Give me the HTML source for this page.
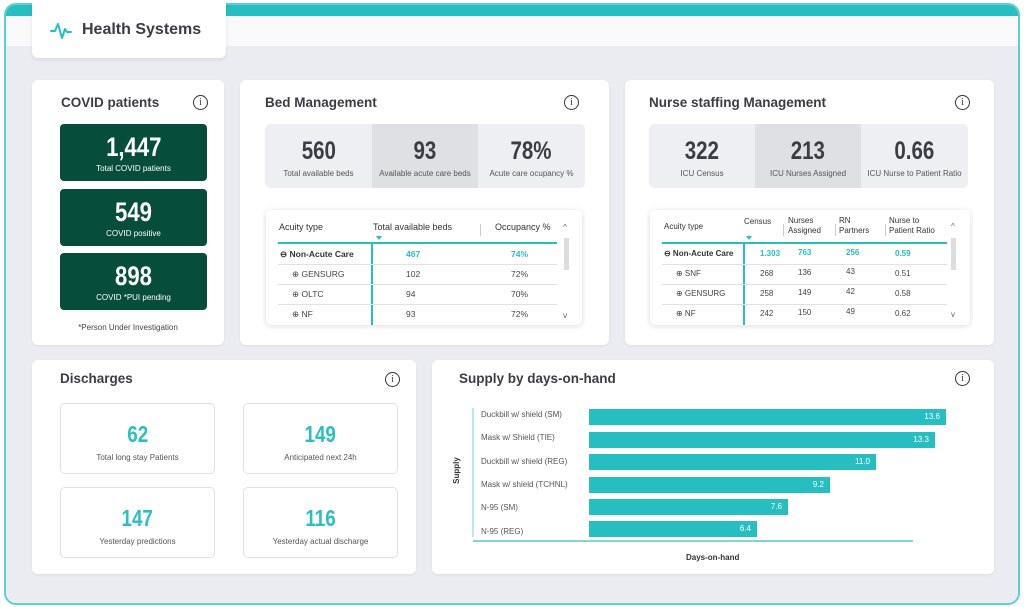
<!DOCTYPE html>
<html><head><meta charset="utf-8"><style>
*{box-sizing:border-box;margin:0;padding:0}
body{width:1024px;height:607px;background:#fff;font-family:"Liberation Sans",sans-serif;color:#3a3d44;position:relative;overflow:hidden}
.abs{position:absolute}
.frame{left:4px;top:3px;width:1016px;height:602px;border:2px solid #5ccfd0;border-radius:12px;background:#ebecf1;overflow:hidden}
.card{position:absolute;background:#fff;border-radius:6px;box-shadow:0 1px 3px rgba(0,0,0,.06)}
.h{position:absolute;font-size:13.5px;font-weight:bold;color:#3a3d44}
.info{position:absolute;width:15px;height:15px;border:1.3px solid #333;border-radius:50%;font-size:10px;text-align:center;line-height:13px;font-family:"Liberation Serif",serif}
i.n{display:inline-block;transform:scaleX(.82);font-style:normal}
.g{position:absolute;background:#074d3b;border-radius:4px;color:#fff;text-align:center}
.g b{display:block;font-size:27px;margin-top:8px;font-weight:bold}
.g span{font-size:8px;display:block;margin-top:1px}
.kpi{position:absolute;top:0;height:64px;text-align:center}
.kpi b{display:block;font-size:25px;margin-top:13px;font-weight:bold;color:#3a3d44}
.kpi span{font-size:8px;color:#555;display:block;margin-top:3px}
.tbl{position:absolute;background:#fff;border-radius:5px;box-shadow:0 1px 6px rgba(0,0,0,.15);font-size:8.5px;color:#444}
.t{position:absolute;white-space:nowrap}
.dt{position:absolute;border:1px solid #dfe0e4;border-radius:5px;text-align:center;background:#fff}
.dt b{display:block;font-size:23px;color:#2bbfc2;margin-top:17px;font-weight:bold}
.dt span{display:block;font-size:8px;color:#555;margin-top:5px}
.bar{position:absolute;left:589px;height:16px;background:#26bec1;color:#fff;font-size:8px;text-align:right;padding-right:6px;line-height:16px}
.lab{position:absolute;left:481px;font-size:8px;color:#555}
</style></head><body>
<div class="abs frame">
 <div class="abs" style="left:0;top:0;width:1016px;height:11px;background:#26bec1"></div>
 <div class="abs" style="left:0;top:11px;width:1016px;height:30px;background:#f9f9fb"></div>
</div>
<div class="card" style="left:32px;top:0;width:194px;height:58px;border-radius:0 0 6px 6px;box-shadow:0 2px 4px rgba(0,0,0,.08)">
 <svg class="abs" style="left:18px;top:22px" width="22" height="18" viewBox="0 0 22 18"><path d="M1 9h4l3-7 4 14 3-9 2 3h4" fill="none" stroke="#26bec1" stroke-width="2" stroke-linejoin="round" stroke-linecap="round"/></svg>
 <div class="abs" style="left:50px;top:21px;font-size:16px;font-weight:bold;color:#3a3d44">Health Systems</div>
</div>

<div class="card" style="left:32px;top:80px;width:192px;height:265px">
 <div class="h" style="left:29px;top:15px">COVID patients</div>
 <div class="info" style="left:161px;top:15px">i</div>
 <div class="g" style="left:28px;top:44px;width:147px;height:57px"><b><i class="n">1,447</i></b><span>Total COVID patients</span></div>
 <div class="g" style="left:28px;top:109px;width:147px;height:57px"><b><i class="n">549</i></b><span>COVID positive</span></div>
 <div class="g" style="left:28px;top:173px;width:147px;height:57px"><b><i class="n">898</i></b><span>COVID *PUI pending</span></div>
 <div class="t" style="left:0;width:192px;text-align:center;top:243px;font-size:8px;color:#444">*Person Under Investigation</div>
</div>

<div class="card" style="left:240px;top:80px;width:369px;height:265px">
 <div class="h" style="left:25px;top:15px">Bed Management</div>
 <div class="info" style="left:324px;top:15px">i</div>
 <div class="abs" style="left:25px;top:44px;width:320px;height:64px;background:#eeeff2;border-radius:5px;overflow:hidden">
  <div class="kpi" style="left:0;width:107px"><b><i class="n">560</i></b><span>Total available beds</span></div>
  <div class="kpi" style="left:107px;width:106px;background:#dfe0e4"><b><i class="n">93</i></b><span>Available acute care beds</span></div>
  <div class="kpi" style="left:213px;width:107px"><b><i class="n">78%</i></b><span>Acute care ocupancy %</span></div>
 </div>
 <div class="tbl" style="left:26px;top:130px;width:316px;height:115px">
  <div class="t" style="left:13px;top:12px;font-size:9px;color:#333">Acuity type</div>
  <div class="t" style="left:107px;top:12px;font-size:9px;color:#333">Total available beds</div>
  <div class="abs" style="left:110px;top:26px;border:3px solid transparent;border-top:4px solid #26bec1"></div>
  <div class="abs" style="left:214px;top:14px;width:1px;height:12px;background:#ccc"></div>
  <div class="t" style="left:229px;top:12px;font-size:9px;color:#333">Occupancy %</div>
  <div class="t" style="left:297px;top:12px;color:#666">^</div>
  <div class="abs" style="left:298px;top:28px;width:5px;height:32px;background:#ddd"></div>
  <div class="t" style="left:297px;top:100px;color:#666">v</div>
  <div class="abs" style="left:12px;top:32px;width:279px;height:2px;background:#26bec1"></div>
  <div class="abs" style="left:105px;top:32px;width:2px;height:83px;background:#26bec1"></div>
  <div class="abs" style="left:12px;top:54px;width:279px;height:1px;background:#e2e2e2"></div>
  <div class="abs" style="left:12px;top:74px;width:279px;height:1px;background:#e2e2e2"></div>
  <div class="abs" style="left:12px;top:94px;width:279px;height:1px;background:#e2e2e2"></div>
  <div class="t" style="left:14px;top:39px;font-weight:bold;color:#333">⊖ Non-Acute Care</div>
  <div class="t" style="left:140px;top:39px;color:#26bec1;font-weight:bold">467</div>
  <div class="t" style="left:245px;top:39px;color:#26bec1;font-weight:bold">74%</div>
  <div class="t" style="left:26px;top:59px">⊕ GENSURG</div><div class="t" style="left:140px;top:59px">102</div><div class="t" style="left:245px;top:59px">72%</div>
  <div class="t" style="left:26px;top:79px">⊕ OLTC</div><div class="t" style="left:140px;top:79px">94</div><div class="t" style="left:245px;top:79px">70%</div>
  <div class="t" style="left:26px;top:99px">⊕ NF</div><div class="t" style="left:140px;top:99px">93</div><div class="t" style="left:245px;top:99px">72%</div>
 </div>
</div>

<div class="card" style="left:625px;top:80px;width:369px;height:265px">
 <div class="h" style="left:24px;top:15px">Nurse staffing Management</div>
 <div class="info" style="left:330px;top:15px">i</div>
 <div class="abs" style="left:24px;top:44px;width:319px;height:64px;background:#eeeff2;border-radius:5px;overflow:hidden">
  <div class="kpi" style="left:0;width:106px"><b><i class="n">322</i></b><span>ICU Census</span></div>
  <div class="kpi" style="left:106px;width:106px;background:#dfe0e4"><b><i class="n">213</i></b><span>ICU Nurses Assigned</span></div>
  <div class="kpi" style="left:212px;width:107px"><b><i class="n">0.66</i></b><span>ICU Nurse to Patient Ratio</span></div>
 </div>
 <div class="tbl" style="left:25px;top:130px;width:320px;height:115px;font-size:8px">
  <div class="t" style="left:14px;top:12px;color:#333">Acuity type</div>
  <div class="t" style="left:94px;top:7px;color:#333">Census</div>
  <div class="abs" style="left:96px;top:26px;border:3px solid transparent;border-top:4px solid #26bec1"></div>
  <div class="abs" style="left:133px;top:14px;width:1px;height:12px;background:#ccc"></div>
  <div class="t" style="left:138px;top:6px;color:#333;line-height:10px">Nurses<br>Assigned</div>
  <div class="abs" style="left:185px;top:14px;width:1px;height:12px;background:#ccc"></div>
  <div class="t" style="left:189px;top:6px;color:#333;line-height:10px">RN<br>Partners</div>
  <div class="abs" style="left:235px;top:14px;width:1px;height:12px;background:#ccc"></div>
  <div class="t" style="left:239px;top:6px;color:#333;line-height:10px">Nurse to<br>Patient Ratio</div>
  <div class="t" style="left:301px;top:12px;color:#666">^</div>
  <div class="abs" style="left:301px;top:28px;width:5px;height:32px;background:#ddd"></div>
  <div class="t" style="left:301px;top:100px;color:#666">v</div>
  <div class="abs" style="left:12px;top:32px;width:285px;height:2px;background:#26bec1"></div>
  <div class="abs" style="left:93px;top:32px;width:2px;height:83px;background:#26bec1"></div>
  <div class="abs" style="left:12px;top:54px;width:285px;height:1px;background:#e2e2e2"></div>
  <div class="abs" style="left:12px;top:74px;width:285px;height:1px;background:#e2e2e2"></div>
  <div class="abs" style="left:12px;top:94px;width:285px;height:1px;background:#e2e2e2"></div>
  <div class="t" style="left:14px;top:39px;font-weight:bold;color:#333">⊖ Non-Acute Care</div>
  <div class="t" style="left:110px;top:39px;color:#26bec1;font-weight:bold">1.303</div>
  <div class="t" style="left:148px;top:38px;color:#26bec1;font-weight:bold">763</div>
  <div class="t" style="left:196px;top:38px;color:#26bec1;font-weight:bold">256</div>
  <div class="t" style="left:245px;top:39px;color:#26bec1;font-weight:bold">0.59</div>
  <div class="t" style="left:26px;top:59px">⊕ SNF</div><div class="t" style="left:110px;top:59px">268</div><div class="t" style="left:148px;top:58px">136</div><div class="t" style="left:196px;top:57px">43</div><div class="t" style="left:245px;top:59px">0.51</div>
  <div class="t" style="left:26px;top:79px">⊕ GENSURG</div><div class="t" style="left:110px;top:79px">258</div><div class="t" style="left:148px;top:78px">149</div><div class="t" style="left:196px;top:77px">42</div><div class="t" style="left:245px;top:79px">0.58</div>
  <div class="t" style="left:26px;top:99px">⊕ NF</div><div class="t" style="left:110px;top:99px">242</div><div class="t" style="left:148px;top:98px">150</div><div class="t" style="left:196px;top:97px">49</div><div class="t" style="left:245px;top:99px">0.62</div>
 </div>
</div>

<div class="card" style="left:32px;top:360px;width:384px;height:214px">
 <div class="h" style="left:28px;top:11px">Discharges</div>
 <div class="info" style="left:353px;top:12px">i</div>
 <div class="dt" style="left:28px;top:43px;width:155px;height:71px"><b><i class="n">62</i></b><span>Total long stay Patients</span></div>
 <div class="dt" style="left:211px;top:43px;width:155px;height:71px"><b><i class="n">149</i></b><span>Anticipated next 24h</span></div>
 <div class="dt" style="left:28px;top:127px;width:155px;height:71px"><b><i class="n">147</i></b><span>Yesterday predictions</span></div>
 <div class="dt" style="left:211px;top:127px;width:155px;height:71px"><b><i class="n">116</i></b><span>Yesterday actual discharge</span></div>
</div>

<div class="card" style="left:432px;top:360px;width:562px;height:214px">
 <div class="h" style="left:27px;top:11px">Supply by days-on-hand</div>
 <div class="info" style="left:523px;top:11px">i</div>
</div>
<div class="abs" style="left:472px;top:408px;width:2px;height:129px;background:#b9e8e9"></div>
<div class="abs" style="left:473px;top:540px;width:440px;height:1.5px;background:#7fd7d8"></div>
<div class="abs" style="left:443px;top:466px;transform:rotate(-90deg);font-size:8px;font-weight:bold;color:#333">Supply</div>
<div class="abs" style="left:686px;top:553px;font-size:8px;font-weight:bold;color:#333">Days-on-hand</div>
<div class="lab" style="top:410px">Duckbill w/ shield (SM)</div>
<div class="lab" style="top:433px">Mask w/ Shield (TIE)</div>
<div class="lab" style="top:457px">Duckbill w/ shield (REG)</div>
<div class="lab" style="top:480px">Mask w/ shield (TCHNL)</div>
<div class="lab" style="top:503px">N-95 (SM)</div>
<div class="lab" style="top:527px">N-95 (REG)</div>
<div class="bar" style="top:409px;width:357px">13.6</div>
<div class="bar" style="top:432px;width:346px">13.3</div>
<div class="bar" style="top:454px;width:287px">11.0</div>
<div class="bar" style="top:477px;width:241px">9.2</div>
<div class="bar" style="top:499px;width:199px">7.6</div>
<div class="bar" style="top:521px;width:168px">6.4</div>
</body></html>
